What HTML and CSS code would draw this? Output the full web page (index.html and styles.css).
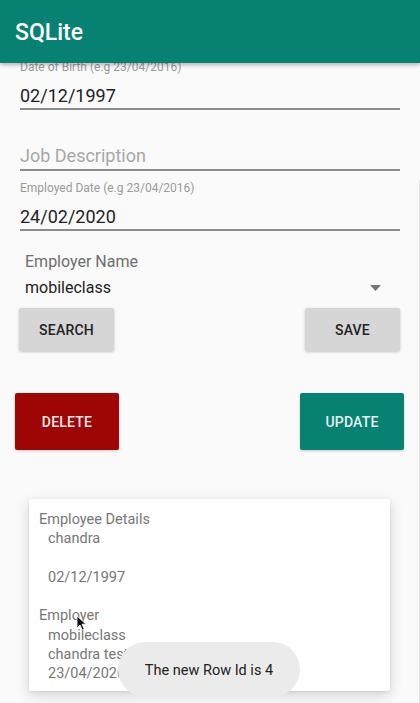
FILE: index.html
```html
<!DOCTYPE html>
<html>
<head>
<meta charset="utf-8">
<link rel="stylesheet" href="styles.css">
</head>
<body>
<div class="screen">
  <header class="appbar"><span class="title">SQLite</span></header>
  <main class="content">
    <div class="field">
      <div class="label">Date of Birth (e.g 23/04/2016)</div>
      <div class="input">02/12/1997</div>
    </div>
    <div class="field nolabel">
      <div class="input hint">Job Description</div>
    </div>
    <div class="field gap">
      <div class="label">Employed Date (e.g 23/04/2016)</div>
      <div class="input">24/02/2020</div>
    </div>
    <div class="spinner">
      <div class="spinner-label">Employer Name</div>
      <div class="spinner-row">
        <span>mobileclass</span>
        <svg class="caret" width="11" height="6" viewBox="0 0 11 6"><path d="M0 0h11L5.5 6z" fill="#757575"/></svg>
      </div>
    </div>
    <div class="row row-grey">
      <button class="btn grey">SEARCH</button>
      <button class="btn grey">SAVE</button>
    </div>
    <div class="row row-color">
      <button class="btn big red">DELETE</button>
      <button class="btn big teal">UPDATE</button>
    </div>
    <div class="card">
      <div class="head">Employee Details</div>
      <div class="item">chandra</div>
      <div class="item">&nbsp;</div>
      <div class="item">02/12/1997</div>
      <div class="item">&nbsp;</div>
      <div class="head">Employer</div>
      <div class="item">mobileclass</div>
      <div class="item">chandra test</div>
      <div class="item">23/04/2020</div>
    </div>
  </main>
  <div class="edge"></div>
  <div class="toast">The new Row Id is 4</div>
  <svg class="cursor" width="11" height="16" viewBox="0 0 11 16"><path d="M1 1v12l3-3 2.2 5 2-1-2.2-4.8H10z" fill="#111" stroke="#fff" stroke-width="0.8"/></svg>
</div>
</body>
</html>
```
FILE: styles.css
```css
* { box-sizing: border-box; }
html, body { margin: 0; padding: 0; }
body {
  width: 420px;
  height: 703px;
  overflow: hidden;
  background: #fafafa;
  font-family: Roboto, "Liberation Sans", sans-serif;
}
.screen {
  position: relative;
  width: 420px;
  height: 703px;
  overflow: hidden;
  background: #fafafa;
}
.appbar {
  position: relative;
  z-index: 3;
  height: 63px;
  background: #068172;
  box-shadow: 0 2px 4px rgba(0, 0, 0, 0.28);
  padding-left: 15px;
  display: flex;
  align-items: center;
}
.title {
  color: #fff;
  font-size: 23px;
  font-weight: 500;
  padding-top: 1px;
}
.content {
  position: relative;
  z-index: 1;
  margin-top: -3px;
}
.field {
  padding: 0 20px;
}
.label {
  font-size: 12px;
  line-height: 14px;
  height: 14px;
  color: #9a9a9a;
}
.input {
  font-size: 18px;
  line-height: 22px;
  padding-top: 11px;
  padding-bottom: 1px;
  color: #222;
  border-bottom: 2px solid #8c8c8c;
}
.input.hint {
  color: #a8a8a8;
  padding-bottom: 2px;
}
.field.nolabel { margin-top: 24px; }
.field.gap { margin-top: 10px; }
.spinner {
  padding: 0 39px 0 25px;
  margin-top: 21px;
}
.spinner-label {
  font-size: 16px;
  line-height: 20px;
  color: #6e6e6e;
}
.spinner-row {
  margin-top: 5px;
  height: 20px;
  display: flex;
  align-items: center;
  justify-content: space-between;
  font-size: 16px;
  color: #222;
}
.caret { margin-top: 1px; }
.row {
  display: flex;
  justify-content: space-between;
}
.row-grey {
  margin-top: 11px;
  padding: 0 20px 0 19px;
}
.row-color {
  margin-top: 42px;
  padding: 0 16px 0 15px;
}
.btn {
  border: 0;
  border-radius: 2px;
  font-family: Roboto, "Liberation Sans", sans-serif;
  font-size: 14px;
  font-weight: 500;
  letter-spacing: 0.2px;
  padding: 0;
}
.grey {
  width: 95px;
  height: 43px;
  background: #d6d6d6;
  color: #222;
  box-shadow: 0 1px 3px rgba(0, 0, 0, 0.22);
}
.big {
  width: 104px;
  height: 57px;
  color: #f1e9e9;
  box-shadow: 0 1px 3px rgba(0, 0, 0, 0.2);
}
.red { background: #9e0505; }
.teal { background: #068172; color: #e8f2f1; }
.card {
  margin: 49px 0 0 29px;
  width: 361px;
  height: 192px;
  background: #fff;
  border-radius: 2px;
  box-shadow: 0 4px 14px rgba(0, 0, 0, 0.16), 0 1px 3px rgba(0, 0, 0, 0.08);
  padding: 11px 10px 0 10px;
  font-size: 14.5px;
  line-height: 19.25px;
  color: #777;
}
.card .item { padding-left: 9px; }
.edge {
  position: absolute;
  right: 0;
  top: 180px;
  bottom: 0;
  width: 1px;
  background: #e2e2e2;
  z-index: 2;
}
.toast {
  position: absolute;
  z-index: 4;
  left: 118px;
  top: 642px;
  width: 182px;
  height: 55px;
  border-radius: 28px;
  background: #ebebeb;
  color: #222;
  font-size: 14.5px;
  padding-top: 2px;
  display: flex;
  align-items: center;
  justify-content: center;
}
.cursor {
  position: absolute;
  z-index: 5;
  left: 76px;
  top: 615px;
}
```
